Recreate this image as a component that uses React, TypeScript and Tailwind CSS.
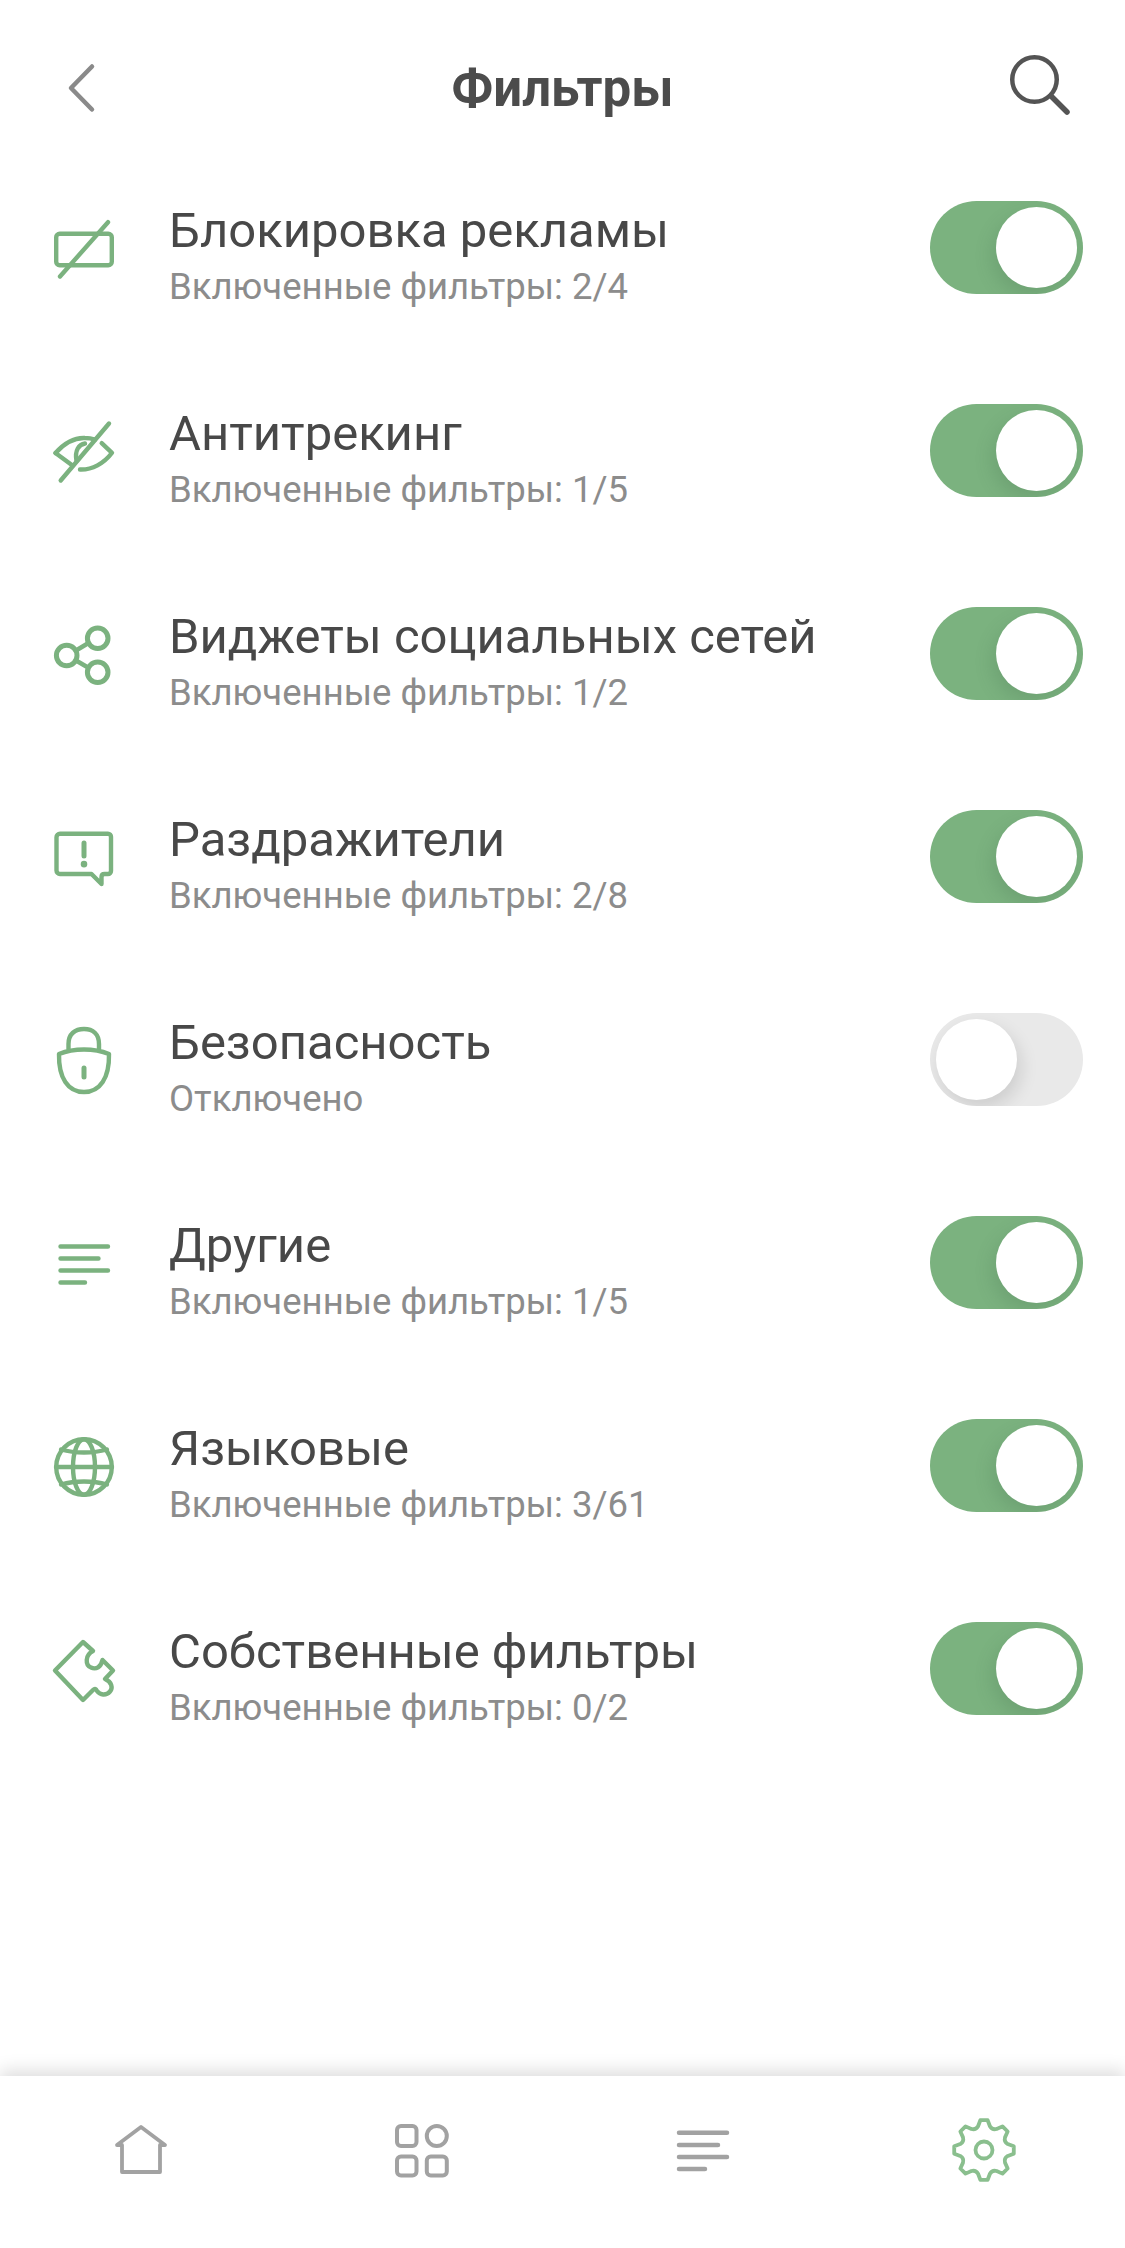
import type { ReactNode } from 'react'

const Icon = ({ children }: { children: ReactNode }) => (
  <svg viewBox="0 0 64 64" fill="none" stroke="#7bb27f" strokeWidth="4.4" strokeLinecap="round" strokeLinejoin="round" className="w-16 h-16 shrink-0 overflow-visible">
    {children}
  </svg>
)

const AdIcon = () => (
  <Icon>
    <rect x="4.2" y="17.8" width="55.6" height="31.4" rx="3.5" />
    <path d="M8 60.5 56 6.2" />
  </Icon>
)

const EyeIcon = () => (
  <Icon>
    <path d="M3.5 34C12 24.5 23 18.5 33 19c3.5 0 7 .6 10 1.6" />
    <path d="M3.5 34 20.500 46.5" />
    <path d="M49.7 24.2 60 33.8C52 44.5 40 51 28 50.5" />
    <path d="M33 24.500C27 25.500 22.500 31 24.500 42" />
    <path d="M8.700 61.500 57 4.500" />
  </Icon>
)

const ShareIcon = () => (
  <Icon>
    <circle cx="14.700" cy="33.500" r="10.300" strokeWidth="5" />
    <circle cx="45.700" cy="16.200" r="10.300" strokeWidth="5" />
    <circle cx="45.700" cy="50.200" r="10.300" strokeWidth="5" />
    <path d="M24 28.500 36.500 21M24 38.500l12 7" />
  </Icon>
)

const AlertIcon = () => (
  <Icon>
    <path d="M8 8.700h48a3 3 0 0 1 3 3V46a3 3 0 0 1-3 3h-3.500c-2 0-3 1-3 3v7L39.500 49H8a3.500 3.500 0 0 1-3.500-3.500V12.200A3.500 3.500 0 0 1 8 8.700Z" />
    <path d="M32 18v13" strokeWidth="5" />
    <path d="M32 39v.2" strokeWidth="6.500" />
  </Icon>
)

const LockIcon = () => (
  <Icon>
    <path d="M16.500 21V16C16.500 6 23 1 32 1s15 5 15 15v5" />
    <path d="M7 26c15-6 35-6 50 0 .5 24-9 38-25 38S6.500 50 7 26Z" />
    <path d="M32 40v9" strokeWidth="5" />
  </Icon>
)

const LinesIcon = () => (
  <Icon>
    <path d="M8.500 15.500H56M8.500 27.500h38M8.500 39.500H56M8.500 51.500H33" />
  </Icon>
)

const GlobeIcon = () => (
  <Icon>
    <circle cx="32" cy="33" r="27.800" />
    <path d="M4 33h56" />
    <ellipse cx="32" cy="33" rx="11" ry="27.800" />
    <path d="M9 15.500c14 4 32 4 46 0M9 50.500c14-4 32-4 46 0" />
  </Icon>
)

const PuzzleIcon = () => (
  <Icon>
    <path d="M3 33.500 31 5l10 9c-8 4-8 14-2 16.500 5 2.500 10-.5 11.500-7.500L61 33.500 53 42c7 3 8 9 5 12.500-4 4.500-10 3.500-13-.5-1-2-2-3-4-1L31 63 3 33.500Z" />
  </Icon>
)

// outline of the settings cog: 8 flat teeth joined by rounded valleys
const polar = (r: number, deg: number) => {
  const a = (deg * Math.PI) / 180
  return `${(32 + r * Math.cos(a)).toFixed(2)} ${(32 + r * Math.sin(a)).toFixed(2)}`
}
const cogPath = (() => {
  let d = ''
  for (let i = 0; i < 8; i++) {
    const a = i * 45 - 90
    d += `${i === 0 ? 'M' : 'L'}${polar(30, a - 7)} L${polar(30, a + 7)} L${polar(24.500, a + 14)} Q${polar(21.500, a + 22.500)} ${polar(24.500, a + 31)} `
  }
  return d + 'Z'
})()

const Toggle = ({ on }: { on: boolean }) => (
  <div className={`flex items-center w-[153px] h-[93px] rounded-full p-[6px] shrink-0 overflow-hidden ${on ? 'bg-[#7bb27f] justify-end' : 'bg-[#e9e9e9] justify-start'}`}>
    <div className={`w-[81px] h-[81px] rounded-full bg-white ${on ? 'shadow-[-4px_8px_18px_rgba(60,100,70,0.2)]' : 'shadow-[4px_8px_18px_rgba(0,0,0,0.12)]'}`} />
  </div>
)

const rows = [
  { icon: <AdIcon />, title: 'Блокировка рекламы', sub: 'Включенные фильтры: 2/4', on: true },
  { icon: <EyeIcon />, title: 'Антитрекинг', sub: 'Включенные фильтры: 1/5', on: true },
  { icon: <ShareIcon />, title: 'Виджеты социальных сетей', sub: 'Включенные фильтры: 1/2', on: true },
  { icon: <AlertIcon />, title: 'Раздражители', sub: 'Включенные фильтры: 2/8', on: true },
  { icon: <LockIcon />, title: 'Безопасность', sub: 'Отключено', on: false },
  { icon: <LinesIcon />, title: 'Другие', sub: 'Включенные фильтры: 1/5', on: true },
  { icon: <GlobeIcon />, title: 'Языковые', sub: 'Включенные фильтры: 3/61', on: true },
  { icon: <PuzzleIcon />, title: 'Собственные фильтры', sub: 'Включенные фильтры: 0/2', on: true },
]

export default function App() {
  return (
    <div className="w-[1125px] h-[2248px] bg-white flex flex-col font-['Roboto',sans-serif] overflow-hidden">
      {/* Header */}
      <div className="h-[146px] pt-[30px] flex items-center justify-between shrink-0">
        <div className="w-[160px] pl-[64px]">
          <svg viewBox="0 0 36 56" fill="none" stroke="#8a8a8a" strokeWidth="4.500" strokeLinecap="round" strokeLinejoin="round" className="w-9 h-14">
            <path d="M28 6.500 7 28l21 21.500" />
          </svg>
        </div>
        <h1 className="text-[51px] leading-none font-bold text-[#4c4c4c]">Фильтры</h1>
        <div className="w-[160px] pr-[45px] flex justify-end">
          <svg viewBox="0 0 72 72" fill="none" stroke="#545454" strokeWidth="4.500" strokeLinecap="round" className="w-[72px] h-[72px]">
            <circle cx="26.500" cy="27.500" r="22.250" />
            <path d="M43 44 59 60" strokeWidth="5.500" />
          </svg>
        </div>
      </div>

      {/* Filter list */}
      <div className="flex-1 flex flex-col">
        {rows.map((r) => (
          <div key={r.title} className="h-[203px] shrink-0 flex items-center pl-[52px] pr-[42px]">
            {r.icon}
            <div className="flex-1 pl-[53px] pt-[17px]">
              <div className="text-[49px] leading-[62px] text-[#484848]">{r.title}</div>
              <div className="text-[36.500px] leading-[50px] text-[#8c8c8c]">{r.sub}</div>
            </div>
            <Toggle on={r.on} />
          </div>
        ))}
      </div>

      {/* Bottom nav */}
      <div className="h-[172px] pb-[25px] shrink-0 grid grid-cols-4 items-center bg-white shadow-[0_-6px_16px_rgba(0,0,0,0.13)]">
        <div className="flex justify-center">
          <svg viewBox="0 0 56 56" fill="none" stroke="#a2a2a2" strokeWidth="3.800" strokeLinecap="round" strokeLinejoin="round" className="w-14 h-14">
            <path d="M4 23 28 5l24 18h-5v27H9V23H4Z" />
          </svg>
        </div>
        <div className="flex justify-center">
          <svg viewBox="0 0 56 56" fill="none" stroke="#a2a2a2" strokeWidth="4" className="w-14 h-14">
            <rect x="3" y="4" width="19.500" height="20" rx="4" />
            <ellipse cx="42.800" cy="14" rx="10" ry="10" />
            <rect x="3" y="34.500" width="19.500" height="19" rx="4" />
            <rect x="32.800" y="34.500" width="20" height="19" rx="4" />
          </svg>
        </div>
        <div className="flex justify-center">
          <svg viewBox="0 0 56 56" fill="none" stroke="#a2a2a2" strokeWidth="4.500" strokeLinecap="round" className="w-14 h-14">
            <path d="M4 10.700h48M4 23h39M4 35h48M4 47h26" />
          </svg>
        </div>
        <div className="flex justify-center">
          <svg viewBox="0 0 64 64" fill="none" stroke="#8abf8e" strokeWidth="3.800" strokeLinecap="round" strokeLinejoin="round" className="w-16 h-16 overflow-visible">
            <path d={cogPath} />
            <circle cx="32" cy="32" r="8.500" />
          </svg>
        </div>
      </div>
    </div>
  )
}
